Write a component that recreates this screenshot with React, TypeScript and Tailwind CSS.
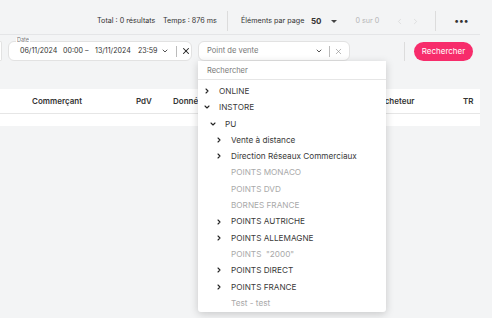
import { ChevronDown, ChevronLeft, ChevronRight, X } from "lucide-react";

type Node = {
  label: string;
  level: number;
  state: "open" | "closed" | "leaf";
};

const nodes: Node[] = [
  { label: "ONLINE", level: 0, state: "closed" },
  { label: "INSTORE", level: 0, state: "open" },
  { label: "PU", level: 1, state: "open" },
  { label: "Vente à distance", level: 2, state: "closed" },
  { label: "Direction Réseaux Commerciaux", level: 2, state: "closed" },
  { label: "POINTS MONACO", level: 2, state: "leaf" },
  { label: "POINTS DVD", level: 2, state: "leaf" },
  { label: "BORNES FRANCE", level: 2, state: "leaf" },
  { label: "POINTS AUTRICHE", level: 2, state: "closed" },
  { label: "POINTS ALLEMAGNE", level: 2, state: "closed" },
  { label: 'POINTS  "2000"', level: 2, state: "leaf" },
  { label: "POINTS DIRECT", level: 2, state: "closed" },
  { label: "POINTS FRANCE", level: 2, state: "closed" },
  { label: "Test - test", level: 2, state: "leaf" },
];

const indent = ["pl-[5px]", "pl-[11px]", "pl-[17px]"];

function TreeRow({ node }: { node: Node }) {
  return (
    <div className={`flex h-[16.3px] items-center ${indent[node.level]}`}>
      <span className="flex w-[16px] shrink-0 items-center">
        {node.state === "closed" && (
          <ChevronRight size={8} strokeWidth={3.2} className="text-[#222]" />
        )}
        {node.state === "open" && (
          <ChevronDown size={8} strokeWidth={3.2} className="text-[#222]" />
        )}
      </span>
      <span
        className={`whitespace-pre ${
          node.state === "leaf" ? "text-[#a9a9a9]" : "text-[#3a3a3a]"
        }`}
      >
        {node.label}
      </span>
    </div>
  );
}

function Dropdown() {
  return (
    <div className="absolute left-0 top-[20px] z-10 h-[251px] w-[188px] rounded-b-[3px] bg-white shadow-[0_2px_8px_rgba(0,0,0,0.18)]">
      <div className="flex h-[19px] items-center border-b border-[#e6e6e6] pl-[9px] pt-[1px] text-[7.5px] text-[#777]">
        Rechercher
      </div>
      <div className="pt-[3px] text-[8.2px]">
        {nodes.map((node, index) => (
          <TreeRow key={index} node={node} />
        ))}
      </div>
    </div>
  );
}

export default function App() {
  return (
    <div className="relative h-[318px] w-[492px] overflow-hidden bg-[#f3f4f5] font-['Inter','Liberation_Sans',sans-serif] text-[#333]">
      <div className="w-[480px]">
        {/* results bar */}
        <div className="flex h-[35px] items-center whitespace-nowrap border-b border-[#e4e5e7] pl-[97px] pt-[8px] text-[7.2px]">
          <span className="w-[56px] shrink-0">Total : 0 résultats</span>
          <span className="ml-[10px] w-[51px] shrink-0">Temps : 876 ms</span>
          <span className="ml-[13px] h-[20px] w-px shrink-0 bg-[#dcdcdc]" />
          <span className="ml-[13px] w-[66px] shrink-0">Éléments par page</span>
          <span className="ml-[4px] shrink-0 text-[8px] font-bold">50</span>
          <span className="ml-[9px] h-0 w-0 shrink-0 border-x-[3px] border-t-[3.5px] border-x-transparent border-t-[#444]" />
          <span className="ml-[19px] shrink-0 text-[#b5b5b5]">0 sur 0</span>
          <ChevronLeft size={9} strokeWidth={1.5} className="ml-[16px] shrink-0 text-[#cfcfcf]" />
          <ChevronRight size={9} strokeWidth={1.5} className="ml-[7px] shrink-0 text-[#cfcfcf]" />
          <span className="ml-[15px] h-[20px] w-px shrink-0 bg-[#dcdcdc]" />
          <span className="ml-[18px] shrink-0 text-[9px] font-bold tracking-[0.5px]">•••</span>
        </div>

        {/* filters */}
        <div className="mt-[6px] flex h-[20px] items-center">
          <div className="h-[20px] w-[2px] shrink-0 rounded-r-[5px] border border-l-0 border-[#e2e2e2] bg-white" />
          <div className="relative ml-[6px] flex h-[20px] w-[184px] shrink-0 items-center whitespace-nowrap rounded-[6px] border border-[#e2e2e2] bg-white pl-[11px] text-[7.1px] text-[#333]">
            <span className="absolute left-[7px] top-[-4px] bg-white px-[1px] text-[5.5px] leading-none text-[#777]">
              Date
            </span>
            <span className="w-[43px] shrink-0">06/11/2024</span>
            <span className="w-[20px] shrink-0">00:00</span>
            <span className="w-[12px] shrink-0 pl-[2px]">–</span>
            <span className="w-[43px] shrink-0">13/11/2024</span>
            <span className="w-[22px] shrink-0">23:59</span>
            <ChevronDown size={8} strokeWidth={2.5} className="ml-[1px] shrink-0 text-[#333]" />
            <span className="ml-[7px] h-[11px] w-px shrink-0 bg-[#bbb]" />
            <X size={10} strokeWidth={2.5} className="ml-[4px] shrink-0 text-[#222]" />
          </div>
          <div className="relative ml-[6px] w-[152px] shrink-0">
            <div className="flex h-[20px] items-center rounded-[6px] border border-[#e2e2e2] bg-white pl-[8px] text-[7.6px] text-[#777]">
              <span>Point de vente</span>
              <ChevronDown size={8} strokeWidth={2.5} className="ml-auto text-[#333]" />
              <span className="ml-[6px] h-[11px] w-px bg-[#bbb]" />
              <X size={9} strokeWidth={1.6} className="ml-[4px] mr-[6px] text-[#888]" />
            </div>
            <Dropdown />
          </div>
          <span className="ml-[54px] h-[19px] w-px shrink-0 bg-[#dcdcdc]" />
          <button className="ml-[9px] flex h-[19px] w-[59px] shrink-0 items-center justify-center rounded-full bg-[#f72c6b] text-[8px] text-white">
            Rechercher
          </button>
        </div>

        {/* table */}
        <div className="mt-[28px] bg-white">
          <div className="relative flex h-[25px] items-center border-b border-[#e6e6e6] text-[8px] font-semibold text-[#333]">
            <span className="ml-[32px] w-[104px]">Commerçant</span>
            <span className="w-[37px]">PdV</span>
            <span className="w-[206px]">Données</span>
            <span className="w-[84px]">Acheteur</span>
            <span>TR</span>
          </div>
          <div className="h-[12px]" />
        </div>
      </div>
    </div>
  );
}
